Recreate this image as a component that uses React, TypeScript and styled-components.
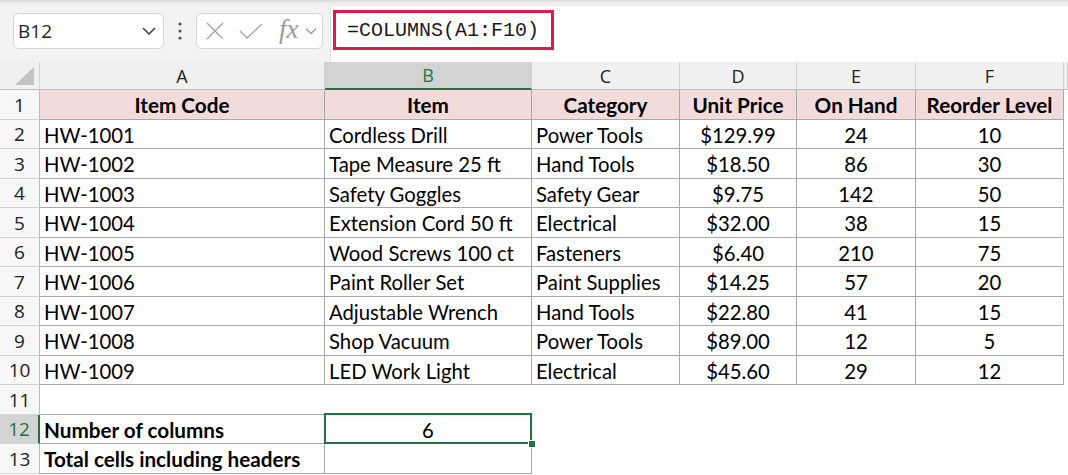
import React from "react";
import styled, { createGlobalStyle } from "styled-components";

const GlobalStyle = createGlobalStyle`
  html, body {
    margin: 0;
    padding: 0;
    background: #ffffff;
    overflow: hidden;
  }
  * { box-sizing: border-box; }
`;

const GREEN = "#217346";
const LINE = "#a9a9a9";
const HEAD_LINE = "#d4d4d4";

const Page = styled.div`
  width: 1068px;
  height: 475px;
  overflow: hidden;
  background: #ffffff;
`;

/* ---------- formula toolbar ---------- */

const Toolbar = styled.div`
  height: 62px;
  display: flex;
  align-items: flex-start;
  padding-left: 13px;
  background: linear-gradient(#d9d9d9 0px, #eeeeee 3px, #f3f3f3 6px);
`;

const NameBox = styled.div`
  margin-top: 13px;
  width: 151px;
  height: 36px;
  display: flex;
  align-items: center;
  justify-content: space-between;
  padding: 0 7px 0 4px;
  background: #ffffff;
  border: 1px solid #d6d6d6;
  border-radius: 6px;
  font-family: "Open Sans", "Noto Sans", sans-serif;
  font-size: 19px;
  color: #1f1f1f;
`;

const Dots = styled.div`
  width: 32px;
  height: 62px;
  display: flex;
  align-items: center;
  justify-content: center;
`;

const FuncBox = styled.div`
  margin-top: 13px;
  width: 127px;
  height: 36px;
  display: flex;
  align-items: center;
  padding-left: 9px;
  background: #ffffff;
  border: 1px solid #d6d6d6;
  border-radius: 6px;
`;

const FxLabel = styled.span`
  font-family: "Liberation Serif", "DejaVu Serif", serif;
  font-style: italic;
  font-size: 27px;
  color: #9a9a9a;
  margin-left: 16px;
  margin-right: 6px;
  margin-top: -4px;
  line-height: 1;
`;

const FormulaBar = styled.div`
  margin-left: 7px;
  margin-top: 7px;
  flex: 1;
  height: 55px;
  background: #ffffff;
  border-left: 1px solid #e2e2e2;
  padding: 3px 0 0 2px;
`;

const FormulaText = styled.div`
  width: 221px;
  height: 40px;
  border: 3px solid #e2184a;
  display: flex;
  align-items: center;
  padding-left: 11px;
  font-family: "Liberation Mono", "DejaVu Sans Mono", monospace;
  font-size: 20px;
  color: #1a1a1a;
`;

/* ---------- sheet grid ---------- */

const Sheet = styled.div`
  display: grid;
  grid-template-columns: 40px 285px 207px 148px 117px 119px 148px 4px;
  grid-template-rows: 28px 30px 29px 30px 29px 30px 29px 30px 29px 30px 29px 30px 29px 30px;
`;

const Corner = styled.div`
  background: #f0f0f0;
  border-right: 1px solid ${HEAD_LINE};
  border-bottom: 1px solid #bdbdbd;
  display: flex;
  align-items: flex-end;
  justify-content: flex-end;
  padding: 0 5px 4px 0;
`;

const ColHead = styled.div<{ $active?: boolean }>`
  background: ${(p) => (p.$active ? "#d3d3d3" : "#f0f0f0")};
  color: ${(p) => (p.$active ? GREEN : "#222222")};
  border-right: 1px solid ${HEAD_LINE};
  border-bottom: ${(p) => (p.$active ? `2px solid ${GREEN}` : "1px solid #bdbdbd")};
  display: flex;
  align-items: center;
  justify-content: center;
  font-family: "Open Sans", "Noto Sans", sans-serif;
  font-size: 18px;
`;

const RowHead = styled.div<{ $active?: boolean }>`
  background: ${(p) => (p.$active ? "#d3d3d3" : "#f7f7f7")};
  color: ${(p) => (p.$active ? GREEN : "#222222")};
  border-right: ${(p) => (p.$active ? `2px solid ${GREEN}` : `1px solid #bdbdbd`)};
  border-bottom: 1px solid ${HEAD_LINE};
  display: flex;
  align-items: center;
  justify-content: center;
  font-family: "Open Sans", "Noto Sans", sans-serif;
  font-size: 19px;
`;

const Cell = styled.div<{
  $center?: boolean;
  $bold?: boolean;
  $fill?: boolean;
  $right?: boolean;
  $bottom?: boolean;
  $selected?: boolean;
}>`
  position: relative;
  display: flex;
  align-items: center;
  justify-content: ${(p) => (p.$center ? "center" : "flex-start")};
  padding: 1px 4px 0 4px;
  background: ${(p) => (p.$fill ? "#f2dcdb" : "#ffffff")};
  border-right: 1px solid ${(p) => (p.$right ? LINE : "transparent")};
  border-bottom: 1px solid ${(p) => (p.$bottom ? LINE : "transparent")};
  font-family: Lato, "Open Sans", sans-serif;
  font-size: ${(p) => (p.$bold ? "20.7px" : "20.3px")};
  font-weight: ${(p) => (p.$bold ? 700 : 400)};
  color: #000000;
  white-space: nowrap;

  ${(p) =>
    p.$selected &&
    `
    &::after {
      content: "";
      position: absolute;
      top: -2px;
      left: -1px;
      right: -1px;
      bottom: -1px;
      border: 2px solid ${GREEN};
      pointer-events: none;
    }
  `}
`;

const FillHandle = styled.span`
  position: absolute;
  right: -5px;
  bottom: -5px;
  width: 8px;
  height: 8px;
  background: ${GREEN};
  border: 1px solid #ffffff;
  z-index: 2;
`;

const Spacer = styled.div``;

const Chevron = ({ color = "#3a3a3a", w = 14 }: { color?: string; w?: number }) => (
  <svg width={w} height={8} viewBox="0 0 14 8">
    <polyline points="1,1 7,7 13,1" fill="none" stroke={color} strokeWidth="1.5" />
  </svg>
);

const headers = ["Item Code", "Item", "Category", "Unit Price", "On Hand", "Reorder Level"];

const items: string[][] = [
  ["HW-1001", "Cordless Drill", "Power Tools", "$129.99", "24", "10"],
  ["HW-1002", "Tape Measure 25 ft", "Hand Tools", "$18.50", "86", "30"],
  ["HW-1003", "Safety Goggles", "Safety Gear", "$9.75", "142", "50"],
  ["HW-1004", "Extension Cord 50 ft", "Electrical", "$32.00", "38", "15"],
  ["HW-1005", "Wood Screws 100 ct", "Fasteners", "$6.40", "210", "75"],
  ["HW-1006", "Paint Roller Set", "Paint Supplies", "$14.25", "57", "20"],
  ["HW-1007", "Adjustable Wrench", "Hand Tools", "$22.80", "41", "15"],
  ["HW-1008", "Shop Vacuum", "Power Tools", "$89.00", "12", "5"],
  ["HW-1009", "LED Work Light", "Electrical", "$45.60", "29", "12"],
];

export default function App() {
  return (
    <Page>
      <GlobalStyle />
      <Toolbar>
        <NameBox>
          <span>B12</span>
          <Chevron />
        </NameBox>
        <Dots>
          <svg width="4" height="18" viewBox="0 0 4 18">
            <circle cx="2" cy="2" r="1.6" fill="#555" />
            <circle cx="2" cy="9" r="1.6" fill="#555" />
            <circle cx="2" cy="16" r="1.6" fill="#555" />
          </svg>
        </Dots>
        <FuncBox>
          <svg width="18" height="18" viewBox="0 0 18 18">
            <path d="M1 1 L17 17 M17 1 L1 17" stroke="#a6a6a6" strokeWidth="1.4" fill="none" />
          </svg>
          <svg width="24" height="16" viewBox="0 0 24 16" style={{ marginLeft: 15 }}>
            <polyline points="1,8 8,15 23,1" stroke="#a6a6a6" strokeWidth="1.4" fill="none" />
          </svg>
          <FxLabel>fx</FxLabel>
          <Chevron color="#9a9a9a" w={12} />
        </FuncBox>
        <FormulaBar>
          <FormulaText>=COLUMNS(A1:F10)</FormulaText>
        </FormulaBar>
      </Toolbar>

      <Sheet>
        <Corner>
          <svg width="19" height="18" viewBox="0 0 19 18">
            <polygon points="19,0 19,18 0,18" fill="#c3c3c3" />
          </svg>
        </Corner>
        {["A", "B", "C", "D", "E", "F"].map((c) => (
          <ColHead key={c} $active={c === "B"}>
            {c}
          </ColHead>
        ))}
        <ColHead />

        <RowHead>1</RowHead>
        {headers.map((h) => (
          <Cell key={h} $fill $bold $center $right $bottom>
            {h}
          </Cell>
        ))}
        <Spacer />

        {items.map((row, i) => (
          <React.Fragment key={row[0]}>
            <RowHead>{i + 2}</RowHead>
            {row.map((v, j) => (
              <Cell key={j} $center={j >= 3} $right $bottom>
                {v}
              </Cell>
            ))}
            <Spacer />
          </React.Fragment>
        ))}

        <RowHead>11</RowHead>
        <Cell $bottom />
        <Cell $bottom />
        <Cell />
        <Cell />
        <Cell />
        <Cell />
        <Spacer />

        <RowHead $active>12</RowHead>
        <Cell $bold $right $bottom>
          Number of columns
        </Cell>
        <Cell $center $right $bottom $selected>
          6
          <FillHandle />
        </Cell>
        <Cell />
        <Cell />
        <Cell />
        <Cell />
        <Spacer />

        <RowHead>13</RowHead>
        <Cell $bold $right $bottom>
          Total cells including headers
        </Cell>
        <Cell $right $bottom />
        <Cell />
        <Cell />
        <Cell />
        <Cell />
        <Spacer />
      </Sheet>
    </Page>
  );
}
